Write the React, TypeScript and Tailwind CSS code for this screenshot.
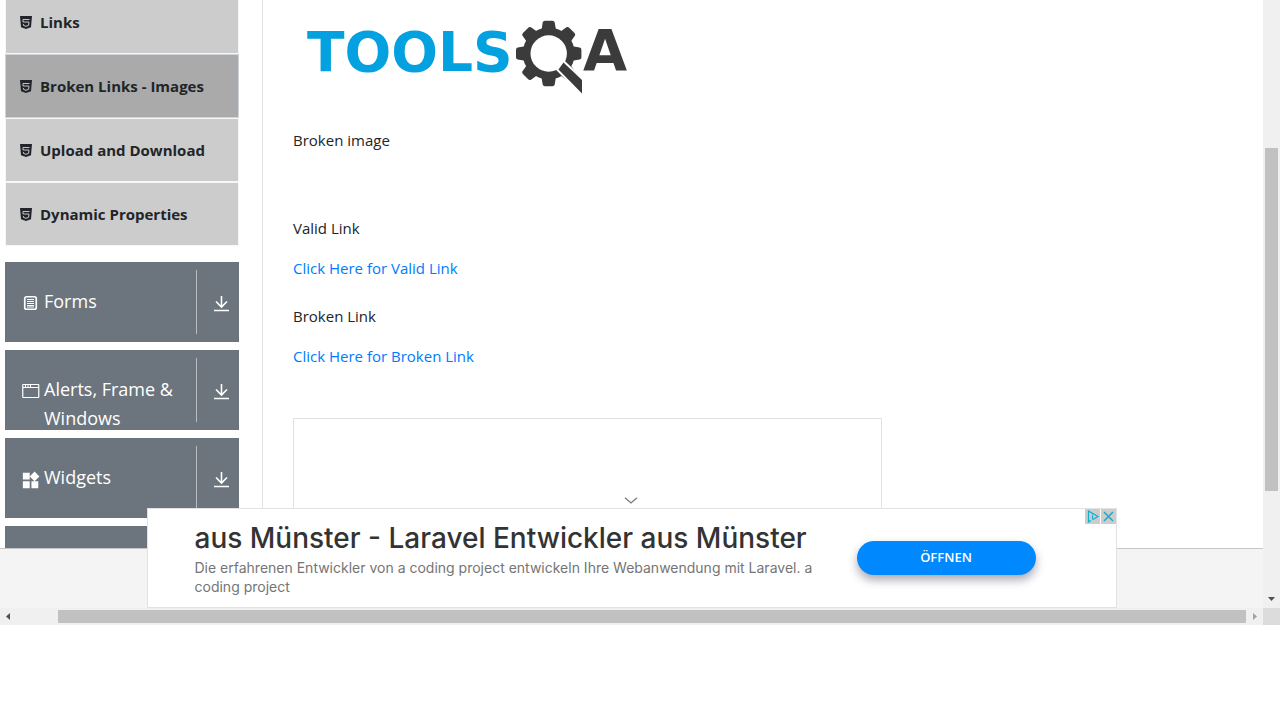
import { MdWidgets } from "react-icons/md";

const uiFont = "font-['Open_Sans','Noto_Sans',sans-serif]";

function HtmlIcon() {
  return (
    <svg viewBox="0 0 12 13" className="h-[13px] w-3 shrink-0" fill="none">
      <path d="M0 0h12l-1 11.300L6 13l-5-1.700Z" fill="currentColor" />
      <path d="M9.500 3.500H3v2.500h6l-.4 3.300L6 10.300 3.500 9.400l-.1-1.400" stroke="#c4c4c4" strokeWidth="1" />
    </svg>
  );
}

function FormsIcon() {
  return (
    <svg viewBox="0 0 18 16" className="h-4 w-[18px]" fill="none" stroke="currentColor">
      <rect x="2.750" y="1.750" width="11.500" height="12.500" rx="1.800" strokeWidth="1.700" />
      <path d="M5 4.500h7M5 6.500h7M5 8.500h7M5 10.500h7M5 12h7" strokeWidth="1" />
    </svg>
  );
}

function WindowIcon() {
  return (
    <svg viewBox="0 0 18 16" className="h-4 w-[18px]" fill="none" stroke="currentColor">
      <rect x="0.75" y="1.5" width="16" height="13" rx="0.5" strokeWidth="1.2" />
      <path d="M1 4.5h16M3.5 1.5v3M6 1.5v3M8.5 1.5v3" strokeWidth="1" />
    </svg>
  );
}

function DownloadIcon() {
  return (
    <svg viewBox="0 0 16 18" className="h-[18px] w-4" fill="none" stroke="currentColor" strokeWidth="1.6">
      <path d="M7.500 1v11M2 6.500 7.500 12l5.500-5.500M0 15.500h15" />
    </svg>
  );
}

const items = ["Links", "Broken Links - Images", "Upload and Download", "Dynamic Properties"];

const groups = [
  { label: "Forms", icon: <FormsIcon /> },
  { label: "Alerts, Frame & Windows", icon: <WindowIcon /> },
  { label: "Widgets", icon: <MdWidgets viewBox="2 1 21 21" className="size-[18px]" /> },
];

function Sidebar() {
  return (
    <nav className="w-[234px] shrink-0 overflow-hidden">
      <ul className="-mt-2.5">
        {items.map((item) => (
          <li key={item}>
            <button
              className={`flex h-16 w-full items-center gap-2 border pl-3.5 text-left text-[15px] font-bold text-[#212529] ${
                item === "Broken Links - Images" ? "border-[#ced4da] bg-[#aaaaaa]" : "border-[#f6f7f8] bg-[#cccccc]"
              }`}
            >
              <HtmlIcon />
              {item}
            </button>
          </li>
        ))}
      </ul>
      <div className="mt-4 flex flex-col gap-2 text-white">
        {groups.map((group) => (
          <button key={group.label} className="flex h-20 overflow-hidden bg-[#6c757d] py-2 text-left">
            <span className="flex h-16 min-w-0 flex-1 gap-1 pt-[17px] pl-[17px]">
              <span className="mt-2 shrink-0">{group.icon}</span>
              <span className="text-lg leading-[29px]">{group.label}</span>
            </span>
            <span className="flex h-16 w-[43px] shrink-0 items-center justify-center border-l border-[#b9bcbf] pt-1 pl-2">
              <DownloadIcon />
            </span>
          </button>
        ))}
        <div className="h-[22px] bg-[#6c757d]" />
      </div>
    </nav>
  );
}

function Logo() {
  const teeth = [0, 45, 90, 135, 180, 225, 270, 315];
  return (
    <svg viewBox="0 0 330 76" className="ml-[15px] h-[76px] w-[330px] overflow-visible" role="img" aria-label="TOOLSQA">
      <text x="-1" y="51" className="fill-[#04a1e0] font-['DejaVu_Sans'] text-[55px] font-bold">TOOLS</text>
      <g className="fill-[#3b3b3b]">
        {teeth.map((angle) => (
          <path
            key={angle}
            d="M233.500 10 234.700 2.500Q235 .8 237 .8H244.500Q246.300 .8 246.700 2.500L248 10Z"
            transform={`rotate(${angle} 240.700 33.500)`}
          />
        ))}
        <circle cx="240.700" cy="33.500" r="26" />
      </g>
      <circle cx="240.700" cy="33.500" r="18.200" className="fill-white" />
      <path d="M255.500 42.500 274 60V73.500L250.500 49.500Z" className="fill-[#3b3b3b] stroke-white" strokeWidth="4" paintOrder="stroke" />
      <text x="275" y="51" className="fill-[#3b3b3b] font-['DejaVu_Sans'] text-[57px] font-bold">A</text>
    </svg>
  );
}

function Content() {
  return (
    <main className="ml-[23px] flex min-w-0 flex-1 flex-col border-l border-[#dee2e6] pt-5 pl-[30px] text-[15px] leading-6 text-[#212529]">
      <Logo />
      <p className="mt-8">Broken image</p>
      <p className="mt-16">Valid Link</p>
      <a href="#valid" className="mt-4 self-start text-[#007bff]">Click Here for Valid Link</a>
      <p className="mt-6">Broken Link</p>
      <a href="#broken" className="mt-4 self-start text-[#007bff]">Click Here for Broken Link</a>
      <div className="mt-[50px] w-full max-w-[589px] flex-1 border border-b-0 border-[#e2e2e2]" />
    </main>
  );
}

function Banner() {
  return (
    <aside className="absolute inset-x-0 bottom-0 flex flex-col items-center">
      <button aria-label="Collapse" className="mb-1 ml-[-2px] text-[#777777]">
        <svg viewBox="0 0 14 8" className="h-2 w-3.5" fill="none" stroke="currentColor" strokeWidth="1.200">
          <path d="M1 1.700 7 7 13 1.700" />
        </svg>
      </button>
      <div className="flex h-[100px] w-full max-w-[970px] items-start border border-[#e2e2e2] bg-white font-['Inter',sans-serif]">
        <div className="ml-[47px] w-[640px] pt-3">
          <h2 className="text-[28px] leading-[34px] font-medium whitespace-nowrap text-[#333333]">aus Münster - Laravel Entwickler aus Münster</h2>
          <p className="mt-[3px] text-sm leading-[19px] text-[#757575]">
            Die erfahrenen Entwickler von a coding project entwickeln Ihre Webanwendung mit Laravel. a coding project
          </p>
        </div>
        <button className="mt-8 ml-[22px] h-[34px] w-[179px] rounded-full bg-[#0088ff] font-['Open_Sans',sans-serif] text-[13px] font-semibold text-white shadow-[0_5px_10px_rgba(40,40,70,0.4)]">
          ÖFFNEN
        </button>
        <div className="ml-auto flex gap-px text-[#13aecb]">
          <a href="#adchoices" aria-label="AdChoices" className="bg-[#cccccc]">
            <svg viewBox="0 0 15 15" className="size-[15px]" fill="none" stroke="currentColor">
              <path d="M6 11.500 3.500 13V2L13 7.500 8 10.500M7.500 6.500v4M7.500 4.500v1" strokeWidth="1.200" />
            </svg>
          </a>
          <button aria-label="Close ad" className="bg-[#cccccc]">
            <svg viewBox="0 0 15 15" className="size-[15px]" fill="none" stroke="currentColor">
              <path d="m3 3 9 9M12 3l-9 9" strokeWidth="1.500" />
            </svg>
          </button>
        </div>
      </div>
    </aside>
  );
}

export default function App() {
  return (
    <div className={`bg-white ${uiFont}`}>
      <div className="flex">
        <div className="relative min-w-0 flex-1">
          <div className="flex pl-[5px]">
            <Sidebar />
            <Content />
          </div>
          <footer className="h-[60px] border-t border-[#c6c6c6] bg-[#f4f4f4]" />
          <Banner />
        </div>
        <div className="flex w-[17px] shrink-0 flex-col items-center bg-[#f0f0f0] pt-[148px]">
          <div className="h-[343px] w-[13px] bg-[#c1c1c1]" />
          <svg viewBox="0 0 7 4" className="mt-auto mb-[7px] h-1 w-[7px] fill-[#505050]">
            <path d="M0 0h7L3.500 4Z" />
          </svg>
        </div>
      </div>
      <div className="flex h-[17px] items-center bg-[#f0f0f0]">
        <svg viewBox="0 0 4 7" className="ml-1.5 h-[7px] w-1 fill-[#505050]">
          <path d="M4 0v7L0 3.500Z" />
        </svg>
        <div className="ml-12 h-[13px] flex-1 bg-[#c1c1c1]" />
        <svg viewBox="0 0 4 7" className="mr-1.5 ml-[7px] h-[7px] w-1 fill-[#a3a3a3]">
          <path d="M0 0v7l4-3.500Z" />
        </svg>
        <div className="h-full w-[17px] bg-[#dcdcdc]" />
      </div>
    </div>
  );
}
